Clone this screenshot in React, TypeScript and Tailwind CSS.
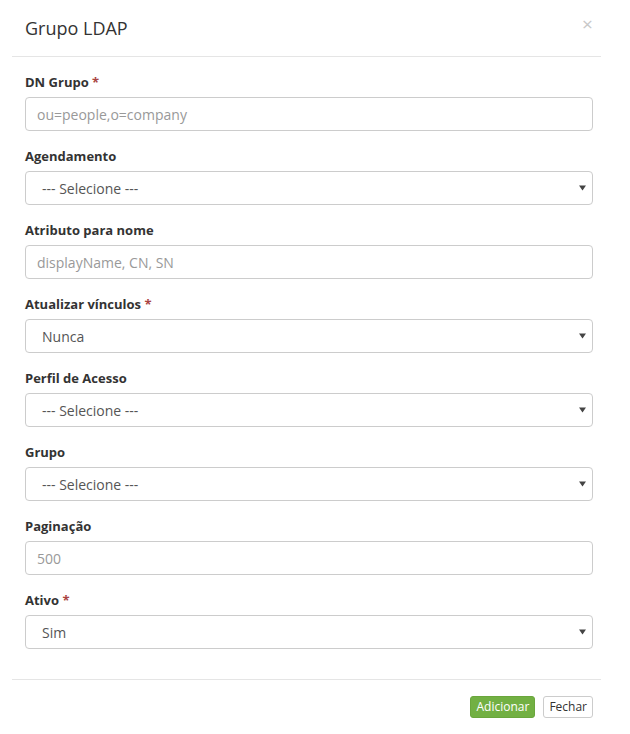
const font = { fontFamily: '"Open Sans", "Noto Sans", sans-serif' };

type Field = {
  label: string;
  required?: boolean;
  kind: "input" | "select";
  value: string;
  placeholder?: boolean;
};

const fields: Field[] = [
  { label: "DN Grupo", required: true, kind: "input", value: "ou=people,o=company", placeholder: true },
  { label: "Agendamento", kind: "select", value: "--- Selecione ---" },
  { label: "Atributo para nome", kind: "input", value: "displayName, CN, SN", placeholder: true },
  { label: "Atualizar vínculos", required: true, kind: "select", value: "Nunca" },
  { label: "Perfil de Acesso", kind: "select", value: "--- Selecione ---" },
  { label: "Grupo", kind: "select", value: "--- Selecione ---" },
  { label: "Paginação", kind: "input", value: "500", placeholder: true },
  { label: "Ativo", required: true, kind: "select", value: "Sim" },
];

function Caret() {
  return (
    <svg width="7" height="6" viewBox="0 0 7 6" className="shrink-0">
      <path d="M0 0.5 L7 0.5 L3.5 5.5 Z" fill="#444" />
    </svg>
  );
}

function FormField({ f }: { f: Field }) {
  return (
    <div className="flex flex-col">
      <label className="h-[18px] text-[13px] leading-[18px] font-bold text-[#333] mb-[6px]">
        {f.label}
        {f.required && <span className="text-[#a94442]"> *</span>}
      </label>
      {f.kind === "input" ? (
        <div className="h-[34px] border border-[#ccc] rounded-[4px] flex items-center px-[11px] text-[14px] text-[#999]">
          {f.value}
        </div>
      ) : (
        <div className="h-[34px] border border-[#ccc] rounded-[4px] flex items-center justify-between pl-[16px] pr-[6px] text-[14px] text-[#555]">
          <span>{f.value}</span>
          <Caret />
        </div>
      )}
    </div>
  );
}

export default function App() {
  return (
    <div className="w-[630px] h-[734px] bg-white relative" style={font}>
      {/* header */}
      <div className="mx-[12px] w-[589px] h-[57px] border-b border-[#e5e5e5] flex items-center pl-[13px] pb-[1px]">
        <h4 className="text-[18px] text-[#333] leading-none">Grupo LDAP</h4>
      </div>
      <span className="absolute left-[582px] top-[15px] text-[19px] leading-none text-[#c8c8c8]">×</span>

      {/* body */}
      <div className="pl-[25px] pr-[37px] pt-[16px] flex flex-col gap-[16px]">
        {fields.map((f) => (
          <FormField key={f.label} f={f} />
        ))}
      </div>

      {/* footer */}
      <div className="mx-[12px] w-[589px] mt-[30px] border-t border-[#e5e5e5] pt-[16px] pr-[8px] flex justify-end gap-[8px]">
        <button className="h-[22px] px-[5px] rounded-[3px] bg-[#72b043] border border-[#6aa63c] text-white text-[12px] leading-none">
          Adicionar
        </button>
        <button className="h-[22px] px-[5px] rounded-[3px] bg-white border border-[#ccc] text-[#333] text-[12px] leading-none">
          Fechar
        </button>
      </div>
    </div>
  );
}
